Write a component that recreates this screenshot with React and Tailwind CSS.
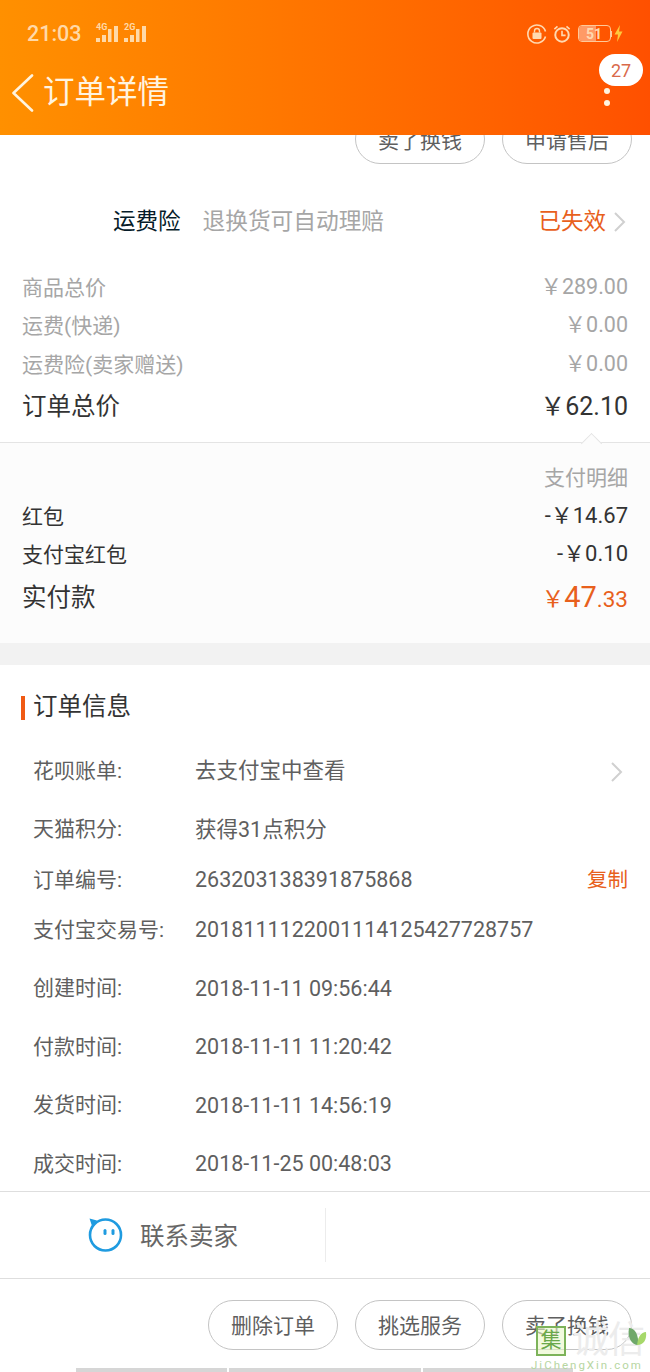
import React from "react";

const cjk = "font-['Roboto','Noto_Sans_CJK_SC',sans-serif]";

function PillButton({ children }) {
  return (
    <div className="flex h-[50px] w-[130px] items-center justify-center rounded-[25px] border border-[#c4c4c4] pt-[5px] text-[21px] text-[#5f5f5f]">
      {children}
    </div>
  );
}

function Signal({ label }) {
  return (
    <div className="relative h-[18px] w-[22px]">
      <span className="absolute left-0 top-[-3px] text-[9px] font-bold leading-[10px] text-[#ffd9a8]">{label}</span>
      <svg width="22" height="18" viewBox="0 0 22 18" className="absolute left-0 top-0">
        <rect x="0" y="13" width="4" height="4" fill="#ffd9a8" />
        <rect x="6" y="10" width="4" height="7" fill="#ffd9a8" />
        <rect x="12" y="4" width="3.5" height="13" fill="#ffd9a8" />
        <rect x="18" y="1" width="4" height="16" fill="#ffd9a8" />
      </svg>
    </div>
  );
}

function StatusBar() {
  return (
    <div className="flex h-[33px] items-center justify-between pl-[27px] pr-[27px]">
      <div className="flex items-center">
        <span className="w-[69px] text-[21.5px] font-medium leading-none text-[#ffd9a8]">21:03</span>
        <div className="flex gap-[6px]">
          <Signal label="4G" />
          <Signal label="2G" />
        </div>
      </div>
      <div className="flex items-center gap-[6px]">
        <svg width="20" height="20" viewBox="0 0 20 20" fill="none">
          <path d="M18.5 12.5A9 9 0 1 1 18.5 7.5" stroke="#ffd9b0" strokeWidth="1.6" />
          <rect x="5.5" y="8.5" width="9" height="6.5" rx="1" fill="#ffd9b0" />
          <path d="M7.5 8.5V7a2.5 2.5 0 0 1 5 0v1.5" stroke="#ffd9b0" strokeWidth="1.4" />
        </svg>
        <svg width="18" height="20" viewBox="0 0 20 20" fill="none">
          <circle cx="10" cy="11" r="7.5" stroke="#ffd9b0" strokeWidth="2.2" />
          <path d="M10 6.5V11.5H14" stroke="#ffd9b0" strokeWidth="1.8" />
          <path d="M1.5 4.5L5 1.5M18.5 4.5L15 1.5" stroke="#ffd9b0" strokeWidth="1.8" />
        </svg>
        <div className="ml-[1px] flex items-center">
          <div className="relative flex h-[17px] w-[33px] items-center justify-center overflow-hidden rounded-[4px] border border-[#ffc999] text-[14px] font-bold leading-none text-[#ffd9b0]">
            <span className="absolute inset-y-0 left-0 w-[17px] bg-[#ff9a66]" />
            <span className="relative">51</span>
          </div>
          <span className="h-[6px] w-[1.5px] bg-[#ffc999]" />
          <svg width="9" height="17" viewBox="0 0 9 17" className="ml-[2px]">
            <path d="M6 0L0.5 9.5H4L3 17L8.5 6.5H5Z" fill="#ffc93c" />
          </svg>
        </div>
      </div>
    </div>
  );
}

function Header() {
  return (
    <div className="relative z-10 h-[135px] bg-gradient-to-r from-[#ff9000] to-[#ff5000] pt-[17px] text-white">
      <StatusBar />
      <div className="relative mt-[20px] flex h-[46px] items-center pl-[12px]">
        <svg width="24" height="38" viewBox="0 0 24 38" fill="none">
          <path d="M20 1.5L1.5 19L20 36.5" stroke="#fff4e0" strokeWidth="2.6" strokeLinecap="round" strokeLinejoin="round" />
        </svg>
        <span className="ml-[7px] text-[31.5px] leading-none text-[#fff4e0]">订单详情</span>
        <span className="absolute right-[7px] top-[-16px] flex h-[32px] w-[44px] items-center justify-center rounded-[16px] bg-white text-[18px] text-[#d9694a]">
          27
        </span>
        <span className="absolute left-[604px] top-[18px] h-[6px] w-[6px] rounded-full bg-[#fff4e0]" />
        <span className="absolute left-[604px] top-[30px] h-[6px] w-[6px] rounded-full bg-[#fff4e0]" />
      </div>
    </div>
  );
}

function PriceRow({ label, value, big }) {
  return (
    <div className={`flex items-center justify-between ${big ? "h-[45px]" : "h-[38.5px]"}`}>
      <span className={big ? "text-[24.5px] text-[#333]" : "text-[21px] text-[#a6a6a6]"}>{label}</span>
      <span className={big ? "text-[25px] text-[#333]" : "-mt-[3px] text-[21.5px] text-[#a6a6a6]"}>{value}</span>
    </div>
  );
}

function InfoRow({ label, value, h, children }) {
  return (
    <div className={`flex items-center pl-[33px] pr-[22px] ${h}`}>
      <span className="w-[162px] text-[21px] text-[#5f5f5f]">{label}</span>
      <span className="flex-1 text-[21.5px] text-[#5f5f5f]">{value}</span>
      {children}
    </div>
  );
}

export default function App() {
  return (
    <div className={`relative h-[1372px] w-[650px] overflow-hidden bg-white ${cjk}`}>
      <Header />

      <div className="-mt-[21px] flex justify-end gap-[17px] pr-[18px]">
        <PillButton>卖了换钱</PillButton>
        <PillButton>申请售后</PillButton>
      </div>

      <div className="mt-[34px] flex h-[48px] items-center pl-[113px] pr-[24px]">
        <span className="text-[22.5px] text-[#051b28]">运费险</span>
        <span className="ml-[22px] flex-1 text-[22.7px] text-[#a6a6a6]">退换货可自动理赔</span>
        <span className="text-[22.5px] text-[#e8601c]">已失效</span>
        <svg width="13" height="22" viewBox="0 0 13 22" fill="none" className="ml-[7px]">
          <path d="M2 2L11 11L2 20" stroke="#d0d0d0" strokeWidth="2" />
        </svg>
      </div>

      <div className="mt-[23px] px-[22px]">
        <PriceRow label="商品总价" value="￥289.00" />
        <PriceRow label="运费(快递)" value="￥0.00" />
        <PriceRow label="运费险(卖家赠送)" value="￥0.00" />
        <PriceRow label="订单总价" value="￥62.10" big />
      </div>

      <div className="relative mt-[12px] h-[201px] border-t border-[#e4e4e4] bg-[#fcfcfc] px-[22px]">
        <span className="absolute left-[584px] top-[-7px] h-[15px] w-[15px] rotate-45 border-l border-t border-[#e4e4e4] bg-[#fcfcfc]" />
        <div className="pt-[19px] text-right text-[21px] leading-[32px] text-[#a6a6a6]">支付明细</div>
        <div className="mt-[4px] flex h-[38px] items-center justify-between text-[#333]">
          <span className="mt-[2px] text-[21px]">红包</span>
          <span className="-mt-[3px] text-[22px]">-￥14.67</span>
        </div>
        <div className="flex h-[39px] items-center justify-between text-[#333]">
          <span className="mt-[2px] text-[21px]">支付宝红包</span>
          <span className="-mt-[3px] text-[22px]">-￥0.10</span>
        </div>
        <div className="flex h-[46px] items-center justify-between">
          <span className="mt-[2px] text-[24.5px] text-[#333]">实付款</span>
          <span className="text-[#e8601c]">
            <span className="text-[22.5px]">￥</span>
            <span className="text-[29px]">47</span>
            <span className="text-[22.5px]">.33</span>
          </span>
        </div>
      </div>

      <div className="h-[22px] bg-[#f2f2f2]" />

      <div className="flex h-[82px] items-center pl-[21px] pt-[4px]">
        <span className="h-[24px] w-[4px] bg-[#f05a14]" />
        <span className="ml-[8px] text-[24.5px] text-[#333]">订单信息</span>
      </div>

      <InfoRow label="花呗账单:" value="去支付宝中查看" h="h-[50px]">
        <svg width="13" height="22" viewBox="0 0 13 22" fill="none" className="mr-[5px]">
          <path d="M2 2L11 11L2 20" stroke="#d0d0d0" strokeWidth="2" />
        </svg>
      </InfoRow>
      <InfoRow label="天猫积分:" value="获得31点积分" h="h-[59px] mt-[4px]" />
      <InfoRow label="订单编号:" value="263203138391875868" h="h-[50px] -mt-[4px]">
        <span className="text-[20.5px] text-[#e8601c]">复制</span>
      </InfoRow>
      <InfoRow label="支付宝交易号:" value="2018111122001114125427728757" h="h-[50px]" />
      <InfoRow label="创建时间:" value="2018-11-11 09:56:44" h="h-[59px] mt-[4px]" />
      <InfoRow label="付款时间:" value="2018-11-11 11:20:42" h="h-[58px]" />
      <InfoRow label="发货时间:" value="2018-11-11 14:56:19" h="h-[59px]" />
      <InfoRow label="成交时间:" value="2018-11-25 00:48:03" h="h-[58px]" />

      <div className="mt-[-3px] flex h-[88px] items-center border-y border-[#dedede]">
        <div className="flex h-[54px] w-[326px] items-center border-r border-[#ececec] pl-[87px]">
          <svg width="36" height="36" viewBox="0 0 36 36" fill="none">
            <circle cx="18.5" cy="18" r="15.5" stroke="#1f9be0" strokeWidth="2.6" />
            <path d="M2.5 1.5L10 3.5L5 9Z" fill="#1f9be0" />
            <rect x="16.5" y="12" width="3" height="6" rx="1.5" fill="#1f9be0" />
            <rect x="24.5" y="12" width="3" height="6" rx="1.5" fill="#1f9be0" />
          </svg>
          <span className="ml-[17px] mt-[6px] text-[24.5px] text-[#666]">联系卖家</span>
        </div>
      </div>

      <div className="mt-[21px] flex justify-end gap-[17px] pr-[18px]">
        <PillButton>删除订单</PillButton>
        <PillButton>挑选服务</PillButton>
        <PillButton>卖了换钱</PillButton>
      </div>

      <div className="mt-[18px] flex h-[4px] gap-[2px] pl-[76px]">
        <span className="w-[151px] bg-[#d6d6d6]" />
        <span className="w-[192px] bg-[#d6d6d6]" />
        <span className="w-[150px] bg-[#d6d6d6]" />
      </div>

      {/* watermark */}
      <div className="pointer-events-none absolute left-[531px] top-[1325px] w-[119px]">
        <div className="flex h-[31px] items-center pl-[5px]">
          <span className="flex h-[30px] w-[30px] items-center justify-center border-2 border-[#7db35a] bg-[#eaf7c8]/60 text-[21px] leading-none text-[#6aa84a]">
            集
          </span>
          <span className="ml-[6px] text-[37px] leading-none tracking-[-1px] text-[#ececec]">诚信</span>
        </div>
        <div className="mt-[3px] whitespace-nowrap text-[11.5px] leading-[13px] tracking-[2px] text-[#b7d6a2]">JiChengXin.com</div>
        <svg width="20" height="20" viewBox="0 0 20 20" className="absolute left-[96px] top-[2px]">
          <path d="M2 1C8 1 12 8 11 18C5 18 0 11 2 1Z" fill="#6fa86a" />
          <path d="M10 18C11 10 14 5 19 5C20 12 17 18 10 18Z" fill="#a6d86a" />
        </svg>
      </div>
    </div>
  );
}
